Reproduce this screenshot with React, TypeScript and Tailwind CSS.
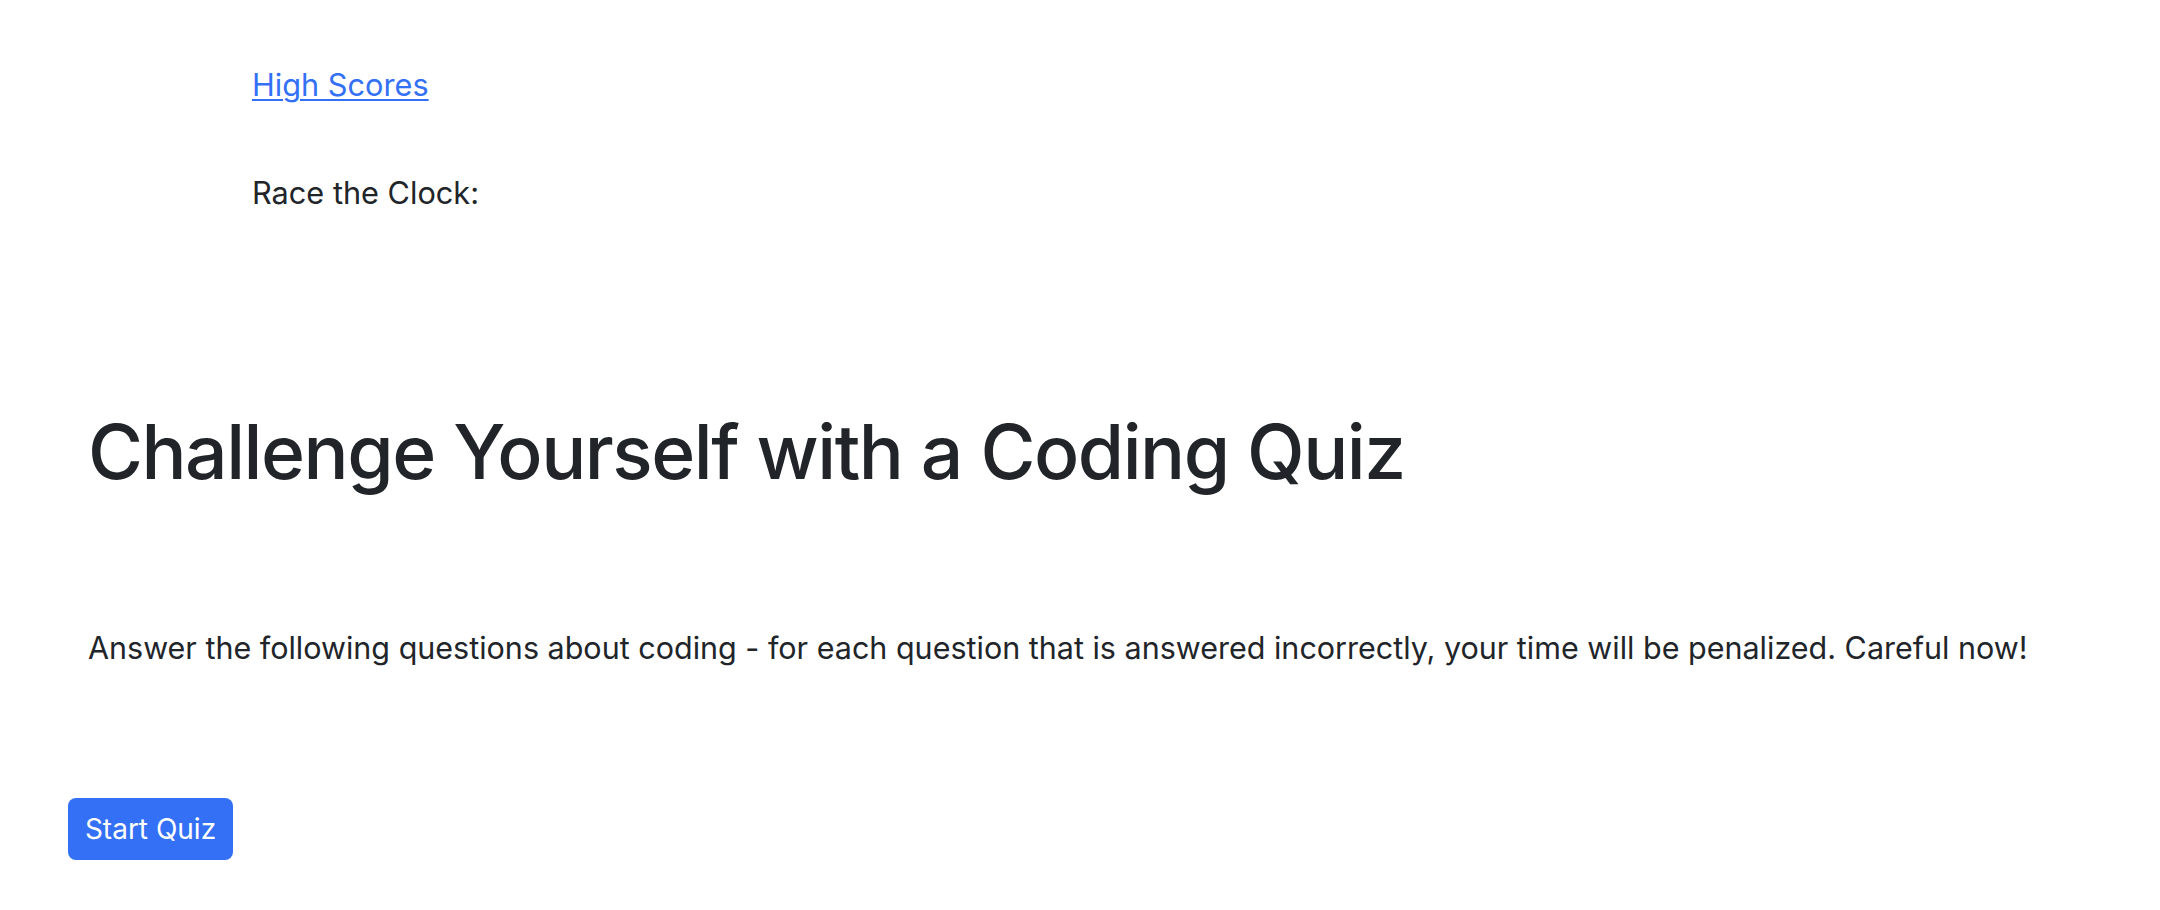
export default function App() {
  return (
    <div className="min-h-[910px] bg-white text-[#212529]" style={{ fontFamily: 'Inter, "Noto Sans", sans-serif' }}>
      <header className="pl-[252px] pt-[65px] flex flex-col">
        <a href="#" className="text-[30.7px] leading-[40px] text-[#3370f5] underline underline-offset-[3px] decoration-2 w-fit">High Scores</a>
        <p className="mt-[68px] text-[30.7px] leading-[40px]">Race the Clock:</p>
      </header>
      <main className="pl-[88px]">
        <h1 className="mt-[191px] text-[75px] leading-[96px] font-medium tracking-[-1.5px]">Challenge Yourself with a Coding Quiz</h1>
        <p className="mt-[128px] text-[30.5px] leading-[40px]">Answer the following questions about coding - for each question that is answered incorrectly, your time will be penalized. Careful now!</p>
      </main>
      <div className="pl-[68px] mt-[130px]">
        <button className="h-[62px] w-[165px] rounded-[8px] bg-[#3370f5] text-white text-[28px]">Start Quiz</button>
      </div>
    </div>
  );
}
